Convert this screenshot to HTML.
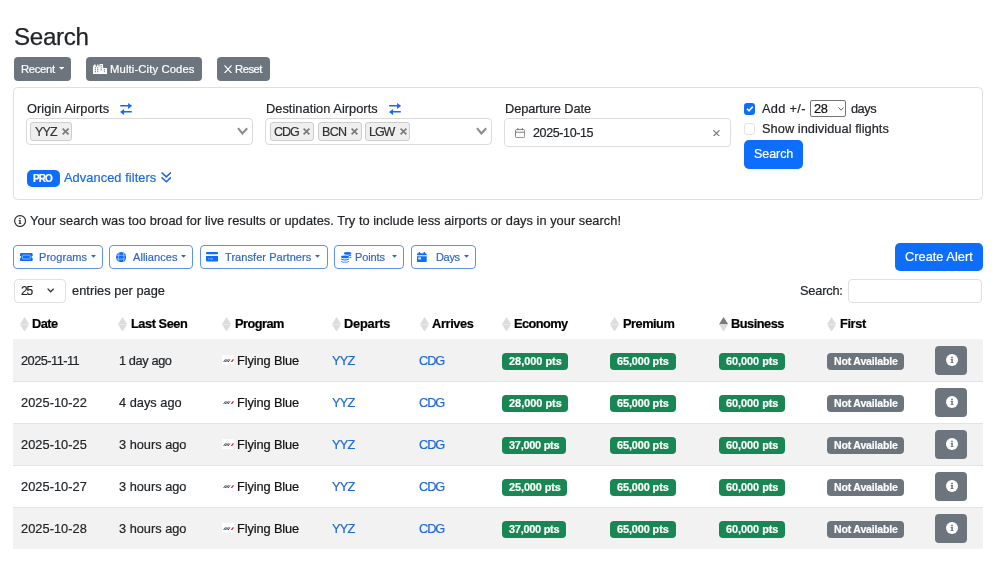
<!DOCTYPE html>
<html><head><meta charset="utf-8"><style>
html,body{margin:0;padding:0;background:#fff;}
body{width:1000px;height:570px;position:relative;overflow:hidden;font-family:"Liberation Sans",sans-serif;}
.t{position:absolute;line-height:1;white-space:nowrap;will-change:transform;-webkit-text-stroke:0.2px currentColor;}
.b{position:absolute;display:block;}
</style></head><body>
<div class="t" style="left:14.00px;top:23px;line-height:27px;font-size:24.2px;letter-spacing:-0.325px;color:#212529;-webkit-text-stroke:0.25px #212529;">Search</div>
<div class="b" style="left:14px;top:57px;width:57px;height:24px;background:#6c757d;border-radius:4px;"></div>
<div class="b" style="left:86px;top:57px;width:116px;height:24px;background:#6c757d;border-radius:4px;"></div>
<div class="b" style="left:217px;top:57px;width:53px;height:24px;background:#6c757d;border-radius:4px;"></div>
<div class="t" style="left:20.80px;top:63px;line-height:12px;font-size:11.3px;letter-spacing:-0.330px;color:#fff;">Recent</div>
<svg class="b" style="left:58.8px;top:67.2px;" width="5.2" height="2.8" viewBox="0 0 5.2 2.8"><path d="M0 0H5.2L2.6 2.8Z" fill="#fff"/></svg>
<svg class="b" style="left:93px;top:63.8px;" width="14.1" height="10.1" viewBox="0 0 14.1 10.1"><path d="M0 10.1V2.5L1.2 0.4H2.5L2.9 2.5H3.8L4.2 0.4H5.4L5.8 2.5H6.5V0.8Q6.5 0 7.3 0H9.3Q10.1 0 10.1 0.8V4.1H14.1V10.1Z" fill="#fff"/><g fill="#6c757d"><rect x="1.85" y="3.25" width="1.1" height="1.1"/><rect x="4.15" y="3.25" width="1.1" height="1.1"/><rect x="1.85" y="5.15" width="1.1" height="1.1"/><rect x="4.15" y="5.15" width="1.1" height="1.1"/><rect x="1.85" y="7.15" width="1.1" height="1.1"/><rect x="4.15" y="7.15" width="1.1" height="1.1"/><rect x="7.65" y="1.15" width="1.1" height="1.1"/><rect x="7.65" y="3.25" width="1.1" height="1.1"/><rect x="7.65" y="5.15" width="1.1" height="1.1"/><rect x="10.85" y="5.15" width="1.1" height="1.1"/><rect x="10.85" y="7.15" width="1.1" height="1.1"/></g></svg>
<div class="t" style="left:109.90px;top:63px;line-height:12px;font-size:11.3px;letter-spacing:0.108px;color:#fff;">Multi-City Codes</div>
<svg class="b" style="left:223.7px;top:64.9px;" width="8.1" height="8.6" viewBox="0 0 8.1 8.6"><path d="M0.5 0.4L7.6 8.2M7.6 0.4L0.5 8.2" stroke="#fff" stroke-width="1.2"/></svg>
<div class="t" style="left:235.30px;top:63px;line-height:12px;font-size:11.3px;letter-spacing:-0.500px;color:#fff;">Reset</div>
<div class="b" style="left:13px;top:87px;width:970px;height:113px;border:1px solid #dfdfdf;border-radius:4.5px;box-sizing:border-box;"></div>
<div class="t" style="left:27.00px;top:101px;line-height:15px;font-size:12.8px;letter-spacing:0.070px;color:#212529;">Origin Airports</div>
<div class="t" style="left:266.30px;top:101px;line-height:15px;font-size:12.8px;letter-spacing:0.037px;color:#212529;">Destination Airports</div>
<div class="t" style="left:505.20px;top:101px;line-height:15px;font-size:12.8px;letter-spacing:-0.115px;color:#212529;">Departure Date</div>
<svg class="b" style="left:120px;top:102.8px;" width="12.3" height="12" viewBox="0 0 12.3 12"><path d="M0.2 2.7H8.6M11.8 8.8H3.6" stroke="#1a6ae6" stroke-width="1.6" fill="none"/><path d="M8.1 0L12.3 2.9L8.1 5.9Z M4.1 6.1L0 9L4.1 12Z" fill="#1a6ae6"/></svg>
<svg class="b" style="left:389px;top:102.8px;" width="12.3" height="12" viewBox="0 0 12.3 12"><path d="M0.2 2.7H8.6M11.8 8.8H3.6" stroke="#1a6ae6" stroke-width="1.6" fill="none"/><path d="M8.1 0L12.3 2.9L8.1 5.9Z M4.1 6.1L0 9L4.1 12Z" fill="#1a6ae6"/></svg>
<div class="b" style="left:26px;top:118px;width:227px;height:27px;border:1px solid #dadada;border-radius:4px;box-sizing:border-box;"></div>
<div class="b" style="left:265px;top:118px;width:227px;height:27px;border:1px solid #dadada;border-radius:4px;box-sizing:border-box;"></div>
<svg class="b" style="left:236.9px;top:127px;" width="11.2" height="8" viewBox="0 0 11.2 8"><path d="M1 1.2L5.4 6.5L10.2 1.2" stroke="#8c8c8c" stroke-width="2.1" fill="none"/></svg>
<svg class="b" style="left:476.2px;top:127px;" width="11.2" height="8" viewBox="0 0 11.2 8"><path d="M1 1.2L5.4 6.5L10.2 1.2" stroke="#8c8c8c" stroke-width="2.1" fill="none"/></svg>
<div class="b" style="left:30.4px;top:122px;width:42.1px;height:19px;background:#efefef;border:1px solid #cdcdcd;border-radius:3px;box-sizing:border-box;"></div>
<div class="t" style="left:34.90px;top:125px;line-height:14px;font-size:12.5px;letter-spacing:-0.775px;color:#333;">YYZ</div>
<svg class="b" style="left:61.6px;top:128px;" width="7.199999999999996" height="7" viewBox="0 0 7.20 7"><path d="M0.6 0.6L6.60 6.4M6.60 0.6L0.6 6.4" stroke="#7c7c7c" stroke-width="1.7"/></svg>
<div class="b" style="left:269.6px;top:122px;width:44.099999999999966px;height:19px;background:#efefef;border:1px solid #cdcdcd;border-radius:3px;box-sizing:border-box;"></div>
<div class="t" style="left:273.80px;top:125px;line-height:14px;font-size:12.5px;letter-spacing:-1.075px;color:#333;">CDG</div>
<svg class="b" style="left:303.2px;top:128px;" width="7.0" height="7" viewBox="0 0 7.00 7"><path d="M0.6 0.6L6.40 6.4M6.40 0.6L0.6 6.4" stroke="#7c7c7c" stroke-width="1.7"/></svg>
<div class="b" style="left:317.6px;top:122px;width:44.0px;height:19px;background:#efefef;border:1px solid #cdcdcd;border-radius:3px;box-sizing:border-box;"></div>
<div class="t" style="left:322.00px;top:125px;line-height:14px;font-size:12.5px;letter-spacing:-0.688px;color:#333;">BCN</div>
<svg class="b" style="left:350.5px;top:128px;" width="7.0" height="7" viewBox="0 0 7.00 7"><path d="M0.6 0.6L6.40 6.4M6.40 0.6L0.6 6.4" stroke="#7c7c7c" stroke-width="1.7"/></svg>
<div class="b" style="left:365px;top:122px;width:45.39999999999998px;height:19px;background:#efefef;border:1px solid #cdcdcd;border-radius:3px;box-sizing:border-box;"></div>
<div class="t" style="left:369.00px;top:125px;line-height:14px;font-size:12.5px;letter-spacing:-1.050px;color:#333;">LGW</div>
<svg class="b" style="left:399.6px;top:128px;" width="7.0" height="7" viewBox="0 0 7.00 7"><path d="M0.6 0.6L6.40 6.4M6.40 0.6L0.6 6.4" stroke="#7c7c7c" stroke-width="1.7"/></svg>
<div class="b" style="left:504px;top:118px;width:227px;height:29px;border:1px solid #dedede;border-radius:4px;box-sizing:border-box;"></div>
<svg class="b" style="left:514.6px;top:127.5px;" width="10.2" height="10.2" viewBox="0 0 10.2 10.2"><rect x="0.5" y="1.5" width="9.2" height="8.2" rx="1.3" stroke="#808080" stroke-width="1" fill="none"/><path d="M0.5 4.2H9.7M2.8 0V2.2M7.4 0V2.2" stroke="#808080" stroke-width="1"/></svg>
<div class="t" style="left:532.50px;top:126px;line-height:14px;font-size:12.5px;letter-spacing:-0.375px;color:#212529;">2025-10-15</div>
<svg class="b" style="left:712.9px;top:129.8px;" width="6.8" height="6.6" viewBox="0 0 6.8 6.6"><path d="M0.3 0.3L6.5 6.3M6.5 0.3L0.3 6.3" stroke="#777" stroke-width="1.15"/></svg>
<div class="b" style="left:743.7px;top:103.4px;width:11.799999999999955px;height:11.199999999999989px;background:#0d6efd;border-radius:3px;"></div>
<svg class="b" style="left:743.7px;top:103.4px;" width="11.8" height="11.2" viewBox="0 0 11.8 11.2"><path d="M3 5.8L5 7.8L8.8 3.6" stroke="#fff" stroke-width="1.6" fill="none"/></svg>
<div class="t" style="left:762.20px;top:101px;line-height:15px;font-size:12.8px;letter-spacing:0.312px;color:#212529;">Add +/-</div>
<div class="b" style="left:810.3px;top:100.2px;width:36.200000000000045px;height:17.299999999999997px;border:1px solid #767676;border-radius:2px;box-sizing:border-box;"></div>
<div class="t" style="left:814.00px;top:101px;line-height:15px;font-size:12.8px;letter-spacing:-0.250px;color:#111;">28</div>
<svg class="b" style="left:838px;top:107.2px;" width="6" height="3.8" viewBox="0 0 6 3.8"><path d="M0.4 0.4L3 3.2L5.6 0.4" stroke="#555" stroke-width="0.9" fill="none"/></svg>
<div class="t" style="left:851.00px;top:101px;line-height:15px;font-size:12.8px;letter-spacing:-0.500px;color:#212529;">days</div>
<div class="b" style="left:743.7px;top:123px;width:11.799999999999955px;height:11.5px;border:1px solid #e3e3e3;border-radius:3px;box-sizing:border-box;"></div>
<div class="t" style="left:762.20px;top:121px;line-height:15px;font-size:12.8px;letter-spacing:0.042px;color:#212529;">Show individual flights</div>
<div class="b" style="left:744px;top:140px;width:59px;height:29px;background:#0d6efd;border-radius:5px;"></div>
<div class="t" style="left:753.80px;top:147px;line-height:14px;font-size:12.5px;letter-spacing:-0.065px;color:#fff;">Search</div>
<div class="b" style="left:26.5px;top:170px;width:33.5px;height:17px;background:#0d6efd;border-radius:5px;"></div>
<div class="t" style="left:33.40px;top:173px;line-height:11px;font-size:10px;letter-spacing:-0.912px;color:#fff;font-weight:700;">PRO</div>
<div class="t" style="left:64.00px;top:170px;line-height:15px;font-size:12.8px;letter-spacing:0.080px;color:#1d69e0;">Advanced filters</div>
<svg class="b" style="left:160.8px;top:172px;" width="10.6" height="10.6" viewBox="0 0 10.6 10.6"><path d="M0.6 0.5L5.3 4.9L10 0.5M0.6 5.4L5.3 9.8L10 5.4" stroke="#2665d6" stroke-width="1.55" fill="none"/></svg>
<svg class="b" style="left:13.5px;top:214.7px;" width="12.2" height="12.2" viewBox="0 0 12.2 12.2"><circle cx="6.05" cy="6.05" r="5.45" stroke="#2a2a2a" stroke-width="1.15" fill="none"/><rect x="5.35" y="5.1" width="1.3" height="3.6" fill="#2a2a2a"/><rect x="4.7" y="8.0" width="2.6" height="0.85" fill="#2a2a2a"/><rect x="4.7" y="5.1" width="1.5" height="0.8" fill="#2a2a2a"/><circle cx="5.95" cy="3.55" r="0.8" fill="#2a2a2a"/></svg>
<div class="t" style="left:30.00px;top:213px;line-height:15px;font-size:12.8px;letter-spacing:0.037px;color:#212529;">Your search was too broad for live results or updates. Try to include less airports or days in your search!</div>
<div class="b" style="left:13px;top:245px;width:90px;height:24px;border:1px solid #5b92ea;border-radius:4px;box-sizing:border-box;"></div>
<div class="b" style="left:109px;top:245px;width:84px;height:24px;border:1px solid #5b92ea;border-radius:4px;box-sizing:border-box;"></div>
<div class="b" style="left:200px;top:245px;width:128px;height:24px;border:1px solid #5b92ea;border-radius:4px;box-sizing:border-box;"></div>
<div class="b" style="left:334px;top:245px;width:70px;height:24px;border:1px solid #5b92ea;border-radius:4px;box-sizing:border-box;"></div>
<div class="b" style="left:411px;top:245px;width:65px;height:24px;border:1px solid #5b92ea;border-radius:4px;box-sizing:border-box;"></div>
<div class="t" style="left:38.60px;top:251px;line-height:12px;font-size:11px;letter-spacing:0.054px;color:#3066c8;">Programs</div>
<div class="t" style="left:133.00px;top:251px;line-height:12px;font-size:11px;letter-spacing:0.050px;color:#3066c8;">Alliances</div>
<div class="t" style="left:225.40px;top:251px;line-height:12px;font-size:11px;letter-spacing:0.067px;color:#3066c8;">Transfer Partners</div>
<div class="t" style="left:355.00px;top:251px;line-height:12px;font-size:11px;letter-spacing:-0.125px;color:#3066c8;">Points</div>
<div class="t" style="left:436.00px;top:251px;line-height:12px;font-size:11px;letter-spacing:-0.333px;color:#3066c8;">Days</div>
<svg class="b" style="left:90.6px;top:255.3px;" width="5" height="2.8" viewBox="0 0 5 2.8"><path d="M0 0H5L2.5 2.8Z" fill="#3066c8"/></svg>
<svg class="b" style="left:181px;top:255.3px;" width="5" height="2.8" viewBox="0 0 5 2.8"><path d="M0 0H5L2.5 2.8Z" fill="#3066c8"/></svg>
<svg class="b" style="left:315.2px;top:255.3px;" width="5" height="2.8" viewBox="0 0 5 2.8"><path d="M0 0H5L2.5 2.8Z" fill="#3066c8"/></svg>
<svg class="b" style="left:392px;top:255.3px;" width="5" height="2.8" viewBox="0 0 5 2.8"><path d="M0 0H5L2.5 2.8Z" fill="#3066c8"/></svg>
<svg class="b" style="left:464px;top:255.3px;" width="5" height="2.8" viewBox="0 0 5 2.8"><path d="M0 0H5L2.5 2.8Z" fill="#3066c8"/></svg>
<svg class="b" style="left:20.1px;top:252.7px;" width="12.7" height="8.1" viewBox="0 0 12.7 8.1"><path d="M1.2 0H11.5Q12.7 0 12.7 1.2V2.9A1.15 1.15 0 0 0 12.7 5.2V6.9Q12.7 8.1 11.5 8.1H1.2Q0 8.1 0 6.9V5.2A1.15 1.15 0 0 0 0 2.9V1.2Q0 0 1.2 0Z" fill="#0d6efd"/><rect x="2.4" y="2.1" width="7.9" height="3.9" rx="0.6" stroke="#8cbcff" stroke-width="0.9" fill="#0d6efd"/></svg>
<svg class="b" style="left:115.9px;top:251.6px;" width="10.4" height="10.4" viewBox="0 0 10.4 10.4"><circle cx="5.2" cy="5.2" r="5.2" fill="#0d6efd"/><path d="M0 3.3H10.4M0 7.1H10.4" stroke="#9cc4ff" stroke-width="0.8"/><path d="M3.0 0.3Q1.7 5.2 3.0 10.1M7.4 0.3Q8.7 5.2 7.4 10.1" stroke="#9cc4ff" stroke-width="0.8" fill="none"/></svg>
<svg class="b" style="left:206.3px;top:252.1px;" width="12.1" height="9.5" viewBox="0 0 12.1 9.5"><rect x="0" y="0" width="12.1" height="2.2" rx="0.9" fill="#0d6efd"/><path d="M0 3.9H12.1V8.3Q12.1 9.5 10.9 9.5H1.2Q0 9.5 0 8.3Z" fill="#0d6efd"/><rect x="2.1" y="6.4" width="1.1" height="1" fill="#9cc4ff"/><rect x="4.1" y="6.4" width="2.8" height="1" fill="#9cc4ff"/></svg>
<svg class="b" style="left:341px;top:251.5px;" width="11" height="11" viewBox="0 0 11 11"><g fill="#0d6efd"><ellipse cx="6.6" cy="1.4" rx="3.7" ry="1.3"/><path d="M7.4 3.3Q9.4 3.1 10.3 2.5V3.5Q9.4 4.1 7.4 4.3Z"/><path d="M8.3 5.3Q9.5 5.1 10.3 4.5V5.5Q9.5 6.1 8.3 6.3Z"/><ellipse cx="4" cy="4.9" rx="4" ry="1.4"/><path d="M0 6.6Q4 8.3 8 6.6V7.6Q4 9.3 0 7.6Z"/><path d="M0 8.9Q4 10.6 8 8.9V9.7Q4 11.4 0 9.7Z"/></g></svg>
<svg class="b" style="left:417px;top:251.7px;" width="9.7" height="10.3" viewBox="0 0 9.7 10.3"><path d="M2.4 0.3V2M7.3 0.3V2" stroke="#0d6efd" stroke-width="1.4" stroke-linecap="round"/><path d="M1.2 1.2H8.5Q9.7 1.2 9.7 2.4V3.2H0V2.4Q0 1.2 1.2 1.2Z" fill="#0d6efd"/><path d="M0 4.2H9.7V9.1Q9.7 10.3 8.5 10.3H1.2Q0 10.3 0 9.1Z" fill="#0d6efd"/><rect x="1.2" y="5.3" width="2.8" height="2.2" fill="#c8e4ff"/></svg>
<div class="b" style="left:895px;top:242.7px;width:87.89999999999998px;height:28.600000000000023px;background:#0d6efd;border-radius:5px;"></div>
<div class="t" style="left:905.40px;top:249px;line-height:15px;font-size:12.8px;letter-spacing:0.016px;color:#fff;">Create Alert</div>
<div class="b" style="left:14px;top:279px;width:52px;height:24px;border:1px solid #e0e0e0;border-radius:4px;box-sizing:border-box;"></div>
<div class="t" style="left:20.80px;top:284px;line-height:14px;font-size:12px;letter-spacing:-1.275px;color:#212529;">25</div>
<svg class="b" style="left:46.7px;top:288.3px;" width="7.3" height="4.5" viewBox="0 0 7.3 4.5"><path d="M0.6 0.6L3.65 3.8L6.7 0.6" stroke="#333" stroke-width="1.3" fill="none"/></svg>
<div class="t" style="left:72.00px;top:283px;line-height:15px;font-size:12.8px;letter-spacing:0.033px;color:#212529;">entries per page</div>
<div class="t" style="left:799.80px;top:283px;line-height:15px;font-size:12.8px;letter-spacing:-0.204px;color:#212529;">Search:</div>
<div class="b" style="left:848px;top:279px;width:134px;height:24px;border:1px solid #e0e0e0;border-radius:4px;box-sizing:border-box;"></div>
<svg class="b" style="left:20.0px;top:316.5px;" width="9.1" height="14.6" viewBox="0 0 9.1 14.6"><path d="M4.55 0L9.1 7.2H0Z" fill="#dcdcdc"/><path d="M0 7.4H9.1L4.55 14.6Z" fill="#dcdcdc"/></svg>
<div class="t" style="left:32.40px;top:316px;line-height:15px;font-size:12.8px;letter-spacing:-0.517px;color:#000;font-weight:700;">Date</div>
<svg class="b" style="left:118.4px;top:316.5px;" width="9.1" height="14.6" viewBox="0 0 9.1 14.6"><path d="M4.55 0L9.1 7.2H0Z" fill="#dcdcdc"/><path d="M0 7.4H9.1L4.55 14.6Z" fill="#dcdcdc"/></svg>
<div class="t" style="left:130.60px;top:316px;line-height:15px;font-size:12.8px;letter-spacing:-0.462px;color:#000;font-weight:700;">Last Seen</div>
<svg class="b" style="left:222.4px;top:316.5px;" width="9.1" height="14.6" viewBox="0 0 9.1 14.6"><path d="M4.55 0L9.1 7.2H0Z" fill="#dcdcdc"/><path d="M0 7.4H9.1L4.55 14.6Z" fill="#dcdcdc"/></svg>
<div class="t" style="left:234.50px;top:316px;line-height:15px;font-size:12.8px;letter-spacing:-0.521px;color:#000;font-weight:700;">Program</div>
<svg class="b" style="left:332.4px;top:316.5px;" width="9.1" height="14.6" viewBox="0 0 9.1 14.6"><path d="M4.55 0L9.1 7.2H0Z" fill="#dcdcdc"/><path d="M0 7.4H9.1L4.55 14.6Z" fill="#dcdcdc"/></svg>
<div class="t" style="left:344.20px;top:316px;line-height:15px;font-size:12.8px;letter-spacing:-0.221px;color:#000;font-weight:700;">Departs</div>
<svg class="b" style="left:419.79999999999995px;top:316.5px;" width="9.1" height="14.6" viewBox="0 0 9.1 14.6"><path d="M4.55 0L9.1 7.2H0Z" fill="#dcdcdc"/><path d="M0 7.4H9.1L4.55 14.6Z" fill="#dcdcdc"/></svg>
<div class="t" style="left:432.00px;top:316px;line-height:15px;font-size:12.8px;letter-spacing:-0.354px;color:#000;font-weight:700;">Arrives</div>
<svg class="b" style="left:502.0px;top:316.5px;" width="9.1" height="14.6" viewBox="0 0 9.1 14.6"><path d="M4.55 0L9.1 7.2H0Z" fill="#dcdcdc"/><path d="M0 7.4H9.1L4.55 14.6Z" fill="#dcdcdc"/></svg>
<div class="t" style="left:514.10px;top:316px;line-height:15px;font-size:12.8px;letter-spacing:-0.587px;color:#000;font-weight:700;">Economy</div>
<svg class="b" style="left:610.1px;top:316.5px;" width="9.1" height="14.6" viewBox="0 0 9.1 14.6"><path d="M4.55 0L9.1 7.2H0Z" fill="#dcdcdc"/><path d="M0 7.4H9.1L4.55 14.6Z" fill="#dcdcdc"/></svg>
<div class="t" style="left:622.60px;top:316px;line-height:15px;font-size:12.8px;letter-spacing:-0.492px;color:#000;font-weight:700;">Premium</div>
<svg class="b" style="left:719.1999999999999px;top:316.5px;" width="9.1" height="14.6" viewBox="0 0 9.1 14.6"><path d="M4.55 0L9.1 7.2H0Z" fill="#7a7a7a"/><path d="M0 7.4H9.1L4.55 14.6Z" fill="#dcdcdc"/></svg>
<div class="t" style="left:731.30px;top:316px;line-height:15px;font-size:12.8px;letter-spacing:-0.496px;color:#000;font-weight:700;">Business</div>
<svg class="b" style="left:827.0px;top:316.5px;" width="9.1" height="14.6" viewBox="0 0 9.1 14.6"><path d="M4.55 0L9.1 7.2H0Z" fill="#dcdcdc"/><path d="M0 7.4H9.1L4.55 14.6Z" fill="#dcdcdc"/></svg>
<div class="t" style="left:839.60px;top:316px;line-height:15px;font-size:12.8px;letter-spacing:-0.388px;color:#000;font-weight:700;">First</div>
<div class="b" style="left:13px;top:339px;width:970px;height:42px;background:#f2f2f2;"></div>
<div class="b" style="left:13px;top:381px;width:970px;height:1px;background:#e4e4e4;z-index:1;"></div>
<div class="t" style="left:20.60px;top:353px;line-height:15px;font-size:12.8px;letter-spacing:-0.536px;color:#212529;">2025-11-11</div>
<div class="t" style="left:118.50px;top:353px;line-height:15px;font-size:12.8px;letter-spacing:-0.406px;color:#212529;">1 day ago</div>
<div class="b" style="left:221.5px;top:355px;width:12.5px;height:9.5px;background:#fff;border-radius:1px;"></div>
<svg class="b" style="left:222.5px;top:358.5px;" width="11" height="3.5" viewBox="0 0 11 3.5"><path d="M0.5 3.2L2.5 0.3M2 3.2L4 0.3M3.5 3.2L5.5 0.3M5 3.2L7 0.3" stroke="#3a3f55" stroke-width="0.9"/><path d="M8.3 3.2L10.4 0.3" stroke="#d22" stroke-width="1.2"/></svg>
<div class="t" style="left:237.30px;top:353px;line-height:15px;font-size:12.8px;letter-spacing:-0.107px;color:#111;">Flying Blue</div>
<div class="t" style="left:332.00px;top:353px;line-height:15px;font-size:12.8px;letter-spacing:-0.787px;color:#2168d8;">YYZ</div>
<div class="t" style="left:419.30px;top:353px;line-height:15px;font-size:12.8px;letter-spacing:-1.100px;color:#2168d8;">CDG</div>
<div class="b" style="left:501.5px;top:352.8px;width:66.70000000000005px;height:17.0px;background:#198754;border-radius:4px;"></div>
<div class="t" style="left:508.50px;top:355px;line-height:12px;font-size:10.9px;letter-spacing:0.006px;color:#fff;font-weight:700;">28,000 pts</div>
<div class="b" style="left:610px;top:352.8px;width:65.70000000000005px;height:17.0px;background:#198754;border-radius:4px;"></div>
<div class="t" style="left:617.00px;top:355px;line-height:12px;font-size:10.9px;letter-spacing:-0.106px;color:#fff;font-weight:700;">65,000 pts</div>
<div class="b" style="left:718.6px;top:352.8px;width:66.39999999999998px;height:17.0px;background:#198754;border-radius:4px;"></div>
<div class="t" style="left:725.60px;top:355px;line-height:12px;font-size:10.9px;letter-spacing:-0.028px;color:#fff;font-weight:700;">60,000 pts</div>
<div class="b" style="left:827px;top:352.7px;width:76.79999999999995px;height:17.100000000000023px;background:#6c757d;border-radius:4px;"></div>
<div class="t" style="left:833.50px;top:355px;line-height:12px;font-size:10.5px;letter-spacing:-0.163px;color:#fff;font-weight:700;">Not Available</div>
<div class="b" style="left:935.3px;top:345.9px;width:31.800000000000068px;height:28.80000000000001px;background:#6c757d;border-radius:4px;"></div>
<svg class="b" style="left:945.6px;top:354.4px;" width="12" height="12" viewBox="0 0 12 12"><circle cx="6" cy="6" r="6" fill="#fff"/><rect x="5.3" y="5" width="1.5" height="3.6" fill="#6c757d"/><rect x="4.6" y="8" width="2.9" height="0.9" fill="#6c757d"/><rect x="4.6" y="5" width="2" height="0.8" fill="#6c757d"/><circle cx="6" cy="3.5" r="0.9" fill="#6c757d"/></svg>
<div class="b" style="left:13px;top:381px;width:970px;height:42px;background:#fff;"></div>
<div class="b" style="left:13px;top:423px;width:970px;height:1px;background:#e4e4e4;z-index:1;"></div>
<div class="t" style="left:20.60px;top:395px;line-height:15px;font-size:12.8px;letter-spacing:0.044px;color:#212529;">2025-10-22</div>
<div class="t" style="left:118.50px;top:395px;line-height:15px;font-size:12.8px;letter-spacing:0.008px;color:#212529;">4 days ago</div>
<div class="b" style="left:221.5px;top:397px;width:12.5px;height:9.5px;background:#fff;border-radius:1px;"></div>
<svg class="b" style="left:222.5px;top:400.5px;" width="11" height="3.5" viewBox="0 0 11 3.5"><path d="M0.5 3.2L2.5 0.3M2 3.2L4 0.3M3.5 3.2L5.5 0.3M5 3.2L7 0.3" stroke="#3a3f55" stroke-width="0.9"/><path d="M8.3 3.2L10.4 0.3" stroke="#d22" stroke-width="1.2"/></svg>
<div class="t" style="left:237.30px;top:395px;line-height:15px;font-size:12.8px;letter-spacing:-0.107px;color:#111;">Flying Blue</div>
<div class="t" style="left:332.00px;top:395px;line-height:15px;font-size:12.8px;letter-spacing:-0.787px;color:#2168d8;">YYZ</div>
<div class="t" style="left:419.30px;top:395px;line-height:15px;font-size:12.8px;letter-spacing:-1.100px;color:#2168d8;">CDG</div>
<div class="b" style="left:501.5px;top:394.8px;width:66.70000000000005px;height:17.0px;background:#198754;border-radius:4px;"></div>
<div class="t" style="left:508.50px;top:397px;line-height:12px;font-size:10.9px;letter-spacing:0.006px;color:#fff;font-weight:700;">28,000 pts</div>
<div class="b" style="left:610px;top:394.8px;width:65.70000000000005px;height:17.0px;background:#198754;border-radius:4px;"></div>
<div class="t" style="left:617.00px;top:397px;line-height:12px;font-size:10.9px;letter-spacing:-0.106px;color:#fff;font-weight:700;">65,000 pts</div>
<div class="b" style="left:718.6px;top:394.8px;width:66.39999999999998px;height:17.0px;background:#198754;border-radius:4px;"></div>
<div class="t" style="left:725.60px;top:397px;line-height:12px;font-size:10.9px;letter-spacing:-0.028px;color:#fff;font-weight:700;">60,000 pts</div>
<div class="b" style="left:827px;top:394.7px;width:76.79999999999995px;height:17.100000000000023px;background:#6c757d;border-radius:4px;"></div>
<div class="t" style="left:833.50px;top:397px;line-height:12px;font-size:10.5px;letter-spacing:-0.163px;color:#fff;font-weight:700;">Not Available</div>
<div class="b" style="left:935.3px;top:387.9px;width:31.800000000000068px;height:28.80000000000001px;background:#6c757d;border-radius:4px;"></div>
<svg class="b" style="left:945.6px;top:396.4px;" width="12" height="12" viewBox="0 0 12 12"><circle cx="6" cy="6" r="6" fill="#fff"/><rect x="5.3" y="5" width="1.5" height="3.6" fill="#6c757d"/><rect x="4.6" y="8" width="2.9" height="0.9" fill="#6c757d"/><rect x="4.6" y="5" width="2" height="0.8" fill="#6c757d"/><circle cx="6" cy="3.5" r="0.9" fill="#6c757d"/></svg>
<div class="b" style="left:13px;top:423px;width:970px;height:42px;background:#f2f2f2;"></div>
<div class="b" style="left:13px;top:465px;width:970px;height:1px;background:#e4e4e4;z-index:1;"></div>
<div class="t" style="left:20.60px;top:437px;line-height:15px;font-size:12.8px;letter-spacing:0.044px;color:#212529;">2025-10-25</div>
<div class="t" style="left:118.50px;top:437px;line-height:15px;font-size:12.8px;letter-spacing:-0.013px;color:#212529;">3 hours ago</div>
<div class="b" style="left:221.5px;top:439px;width:12.5px;height:9.5px;background:#fff;border-radius:1px;"></div>
<svg class="b" style="left:222.5px;top:442.5px;" width="11" height="3.5" viewBox="0 0 11 3.5"><path d="M0.5 3.2L2.5 0.3M2 3.2L4 0.3M3.5 3.2L5.5 0.3M5 3.2L7 0.3" stroke="#3a3f55" stroke-width="0.9"/><path d="M8.3 3.2L10.4 0.3" stroke="#d22" stroke-width="1.2"/></svg>
<div class="t" style="left:237.30px;top:437px;line-height:15px;font-size:12.8px;letter-spacing:-0.107px;color:#111;">Flying Blue</div>
<div class="t" style="left:332.00px;top:437px;line-height:15px;font-size:12.8px;letter-spacing:-0.787px;color:#2168d8;">YYZ</div>
<div class="t" style="left:419.30px;top:437px;line-height:15px;font-size:12.8px;letter-spacing:-1.100px;color:#2168d8;">CDG</div>
<div class="b" style="left:501.5px;top:436.8px;width:64.5px;height:17.0px;background:#198754;border-radius:4px;"></div>
<div class="t" style="left:508.50px;top:439px;line-height:12px;font-size:10.9px;letter-spacing:-0.239px;color:#fff;font-weight:700;">37,000 pts</div>
<div class="b" style="left:610px;top:436.8px;width:65.70000000000005px;height:17.0px;background:#198754;border-radius:4px;"></div>
<div class="t" style="left:617.00px;top:439px;line-height:12px;font-size:10.9px;letter-spacing:-0.106px;color:#fff;font-weight:700;">65,000 pts</div>
<div class="b" style="left:718.6px;top:436.8px;width:66.39999999999998px;height:17.0px;background:#198754;border-radius:4px;"></div>
<div class="t" style="left:725.60px;top:439px;line-height:12px;font-size:10.9px;letter-spacing:-0.028px;color:#fff;font-weight:700;">60,000 pts</div>
<div class="b" style="left:827px;top:436.7px;width:76.79999999999995px;height:17.100000000000023px;background:#6c757d;border-radius:4px;"></div>
<div class="t" style="left:833.50px;top:439px;line-height:12px;font-size:10.5px;letter-spacing:-0.163px;color:#fff;font-weight:700;">Not Available</div>
<div class="b" style="left:935.3px;top:429.9px;width:31.800000000000068px;height:28.80000000000001px;background:#6c757d;border-radius:4px;"></div>
<svg class="b" style="left:945.6px;top:438.4px;" width="12" height="12" viewBox="0 0 12 12"><circle cx="6" cy="6" r="6" fill="#fff"/><rect x="5.3" y="5" width="1.5" height="3.6" fill="#6c757d"/><rect x="4.6" y="8" width="2.9" height="0.9" fill="#6c757d"/><rect x="4.6" y="5" width="2" height="0.8" fill="#6c757d"/><circle cx="6" cy="3.5" r="0.9" fill="#6c757d"/></svg>
<div class="b" style="left:13px;top:465px;width:970px;height:42px;background:#fff;"></div>
<div class="b" style="left:13px;top:507px;width:970px;height:1px;background:#e4e4e4;z-index:1;"></div>
<div class="t" style="left:20.60px;top:479px;line-height:15px;font-size:12.8px;letter-spacing:0.044px;color:#212529;">2025-10-27</div>
<div class="t" style="left:118.50px;top:479px;line-height:15px;font-size:12.8px;letter-spacing:-0.013px;color:#212529;">3 hours ago</div>
<div class="b" style="left:221.5px;top:481px;width:12.5px;height:9.5px;background:#fff;border-radius:1px;"></div>
<svg class="b" style="left:222.5px;top:484.5px;" width="11" height="3.5" viewBox="0 0 11 3.5"><path d="M0.5 3.2L2.5 0.3M2 3.2L4 0.3M3.5 3.2L5.5 0.3M5 3.2L7 0.3" stroke="#3a3f55" stroke-width="0.9"/><path d="M8.3 3.2L10.4 0.3" stroke="#d22" stroke-width="1.2"/></svg>
<div class="t" style="left:237.30px;top:479px;line-height:15px;font-size:12.8px;letter-spacing:-0.107px;color:#111;">Flying Blue</div>
<div class="t" style="left:332.00px;top:479px;line-height:15px;font-size:12.8px;letter-spacing:-0.787px;color:#2168d8;">YYZ</div>
<div class="t" style="left:419.30px;top:479px;line-height:15px;font-size:12.8px;letter-spacing:-1.100px;color:#2168d8;">CDG</div>
<div class="b" style="left:501.5px;top:478.8px;width:65.89999999999998px;height:17.0px;background:#198754;border-radius:4px;"></div>
<div class="t" style="left:508.50px;top:481px;line-height:12px;font-size:10.9px;letter-spacing:-0.083px;color:#fff;font-weight:700;">25,000 pts</div>
<div class="b" style="left:610px;top:478.8px;width:65.70000000000005px;height:17.0px;background:#198754;border-radius:4px;"></div>
<div class="t" style="left:617.00px;top:481px;line-height:12px;font-size:10.9px;letter-spacing:-0.106px;color:#fff;font-weight:700;">65,000 pts</div>
<div class="b" style="left:718.6px;top:478.8px;width:66.39999999999998px;height:17.0px;background:#198754;border-radius:4px;"></div>
<div class="t" style="left:725.60px;top:481px;line-height:12px;font-size:10.9px;letter-spacing:-0.028px;color:#fff;font-weight:700;">60,000 pts</div>
<div class="b" style="left:827px;top:478.7px;width:76.79999999999995px;height:17.100000000000023px;background:#6c757d;border-radius:4px;"></div>
<div class="t" style="left:833.50px;top:481px;line-height:12px;font-size:10.5px;letter-spacing:-0.163px;color:#fff;font-weight:700;">Not Available</div>
<div class="b" style="left:935.3px;top:471.9px;width:31.800000000000068px;height:28.80000000000001px;background:#6c757d;border-radius:4px;"></div>
<svg class="b" style="left:945.6px;top:480.4px;" width="12" height="12" viewBox="0 0 12 12"><circle cx="6" cy="6" r="6" fill="#fff"/><rect x="5.3" y="5" width="1.5" height="3.6" fill="#6c757d"/><rect x="4.6" y="8" width="2.9" height="0.9" fill="#6c757d"/><rect x="4.6" y="5" width="2" height="0.8" fill="#6c757d"/><circle cx="6" cy="3.5" r="0.9" fill="#6c757d"/></svg>
<div class="b" style="left:13px;top:507px;width:970px;height:42px;background:#f2f2f2;"></div>
<div class="t" style="left:20.60px;top:521px;line-height:15px;font-size:12.8px;letter-spacing:0.044px;color:#212529;">2025-10-28</div>
<div class="t" style="left:118.50px;top:521px;line-height:15px;font-size:12.8px;letter-spacing:-0.013px;color:#212529;">3 hours ago</div>
<div class="b" style="left:221.5px;top:523px;width:12.5px;height:9.5px;background:#fff;border-radius:1px;"></div>
<svg class="b" style="left:222.5px;top:526.5px;" width="11" height="3.5" viewBox="0 0 11 3.5"><path d="M0.5 3.2L2.5 0.3M2 3.2L4 0.3M3.5 3.2L5.5 0.3M5 3.2L7 0.3" stroke="#3a3f55" stroke-width="0.9"/><path d="M8.3 3.2L10.4 0.3" stroke="#d22" stroke-width="1.2"/></svg>
<div class="t" style="left:237.30px;top:521px;line-height:15px;font-size:12.8px;letter-spacing:-0.107px;color:#111;">Flying Blue</div>
<div class="t" style="left:332.00px;top:521px;line-height:15px;font-size:12.8px;letter-spacing:-0.787px;color:#2168d8;">YYZ</div>
<div class="t" style="left:419.30px;top:521px;line-height:15px;font-size:12.8px;letter-spacing:-1.100px;color:#2168d8;">CDG</div>
<div class="b" style="left:501.5px;top:520.8px;width:64.5px;height:17.0px;background:#198754;border-radius:4px;"></div>
<div class="t" style="left:508.50px;top:523px;line-height:12px;font-size:10.9px;letter-spacing:-0.239px;color:#fff;font-weight:700;">37,000 pts</div>
<div class="b" style="left:610px;top:520.8px;width:65.70000000000005px;height:17.0px;background:#198754;border-radius:4px;"></div>
<div class="t" style="left:617.00px;top:523px;line-height:12px;font-size:10.9px;letter-spacing:-0.106px;color:#fff;font-weight:700;">65,000 pts</div>
<div class="b" style="left:718.6px;top:520.8px;width:66.39999999999998px;height:17.0px;background:#198754;border-radius:4px;"></div>
<div class="t" style="left:725.60px;top:523px;line-height:12px;font-size:10.9px;letter-spacing:-0.028px;color:#fff;font-weight:700;">60,000 pts</div>
<div class="b" style="left:827px;top:520.7px;width:76.79999999999995px;height:17.09999999999991px;background:#6c757d;border-radius:4px;"></div>
<div class="t" style="left:833.50px;top:523px;line-height:12px;font-size:10.5px;letter-spacing:-0.163px;color:#fff;font-weight:700;">Not Available</div>
<div class="b" style="left:935.3px;top:513.9px;width:31.800000000000068px;height:28.800000000000068px;background:#6c757d;border-radius:4px;"></div>
<svg class="b" style="left:945.6px;top:522.4px;" width="12" height="12" viewBox="0 0 12 12"><circle cx="6" cy="6" r="6" fill="#fff"/><rect x="5.3" y="5" width="1.5" height="3.6" fill="#6c757d"/><rect x="4.6" y="8" width="2.9" height="0.9" fill="#6c757d"/><rect x="4.6" y="5" width="2" height="0.8" fill="#6c757d"/><circle cx="6" cy="3.5" r="0.9" fill="#6c757d"/></svg>
</body></html>
